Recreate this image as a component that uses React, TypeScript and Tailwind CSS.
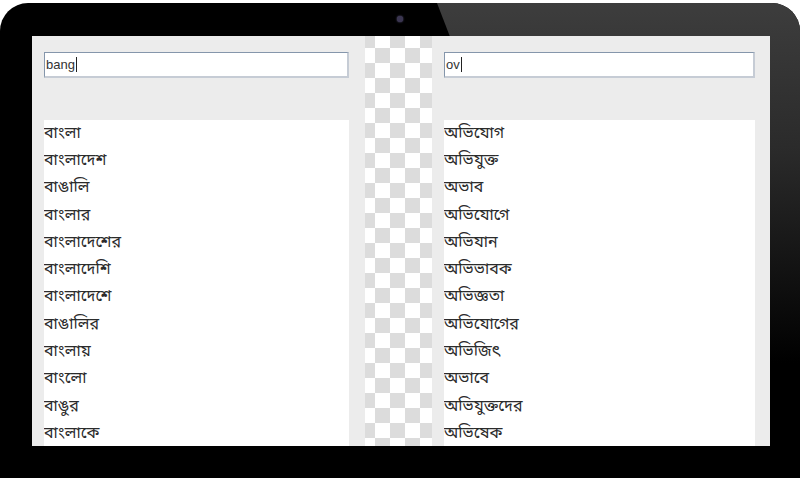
const leftWords = [
  "বাংলা",
  "বাংলাদেশ",
  "বাঙালি",
  "বাংলার",
  "বাংলাদেশের",
  "বাংলাদেশি",
  "বাংলাদেশে",
  "বাঙালির",
  "বাংলায়",
  "বাংলো",
  "বাঙুর",
  "বাংলাকে",
];

const rightWords = [
  "অভিযোগ",
  "অভিযুক্ত",
  "অভাব",
  "অভিযোগে",
  "অভিযান",
  "অভিভাবক",
  "অভিজ্ঞতা",
  "অভিযোগের",
  "অভিজিৎ",
  "অভাবে",
  "অভিযুক্তদের",
  "অভিষেক",
];

const SearchBox = ({ value }: { value: string }) => {
  return (
    <div className="flex h-[26px] items-center bg-white border-t border-l border-[#8596ab] border-b-2 border-r-2 border-b-[#c6ccd5] border-r-[#c6ccd5] pl-[1px]">
      <span className="text-[13px] text-[#333] font-['Liberation_Sans',Arial,sans-serif]">
        {value}
      </span>
      <span className="ml-[1px] h-[15px] w-px bg-[#222]" />
    </div>
  );
};

const WordPanel = ({
  query,
  words,
  width,
}: {
  query: string;
  words: string[];
  width: string;
}) => {
  return (
    <div className={`flex flex-col bg-[#ececec] pl-3 pt-4 ${width}`}>
      <SearchBox value={query} />
      <div className="mt-[42px] flex-1 overflow-hidden bg-white">
        {words.map((w) => (
          <div
            key={w}
            className="flex h-[27.3px] items-center text-[16px] text-[#2b2b2b] font-['Noto_Sans_Bengali','Lohit_Bengali','Vrinda','Noto_Sans',sans-serif]"
          >
            {w}
          </div>
        ))}
      </div>
    </div>
  );
};

export default function App() {
  return (
    <div className="h-[483px] w-[800px] overflow-hidden bg-white pt-[3px]">
      <div className="relative h-[475px] w-[800px] overflow-hidden rounded-t-[28px] bg-black">
        {/* glossy reflection on the bezel */}
        <div className="absolute inset-0 bg-[linear-gradient(to_bottom,#3d3d3d_0px,#2a2a2a_150px,#000_360px)] [clip-path:polygon(437px_0,100%_0,100%_100%,620px_100%)]" />
        {/* camera */}
        <div className="absolute left-[397px] top-[13px] h-[6px] w-[6px] rounded-full bg-[#3a3550] shadow-[0_0_2px_#6b6390]" />

        <div className="relative ml-[32px] mt-[33px] flex h-[410px] w-[738px]">
          <WordPanel query="bang" words={leftWords} width="w-[333px] pr-4" />
          <div className="w-[67px] bg-white bg-[conic-gradient(#dcdcdc_25%,#fff_0_50%,#dcdcdc_0_75%,#fff_0)] bg-[length:30px_30px] bg-[position:10px_-3px]" />
          <WordPanel query="ov" words={rightWords} width="w-[338px] pr-[15px]" />
        </div>
      </div>
    </div>
  );
}
